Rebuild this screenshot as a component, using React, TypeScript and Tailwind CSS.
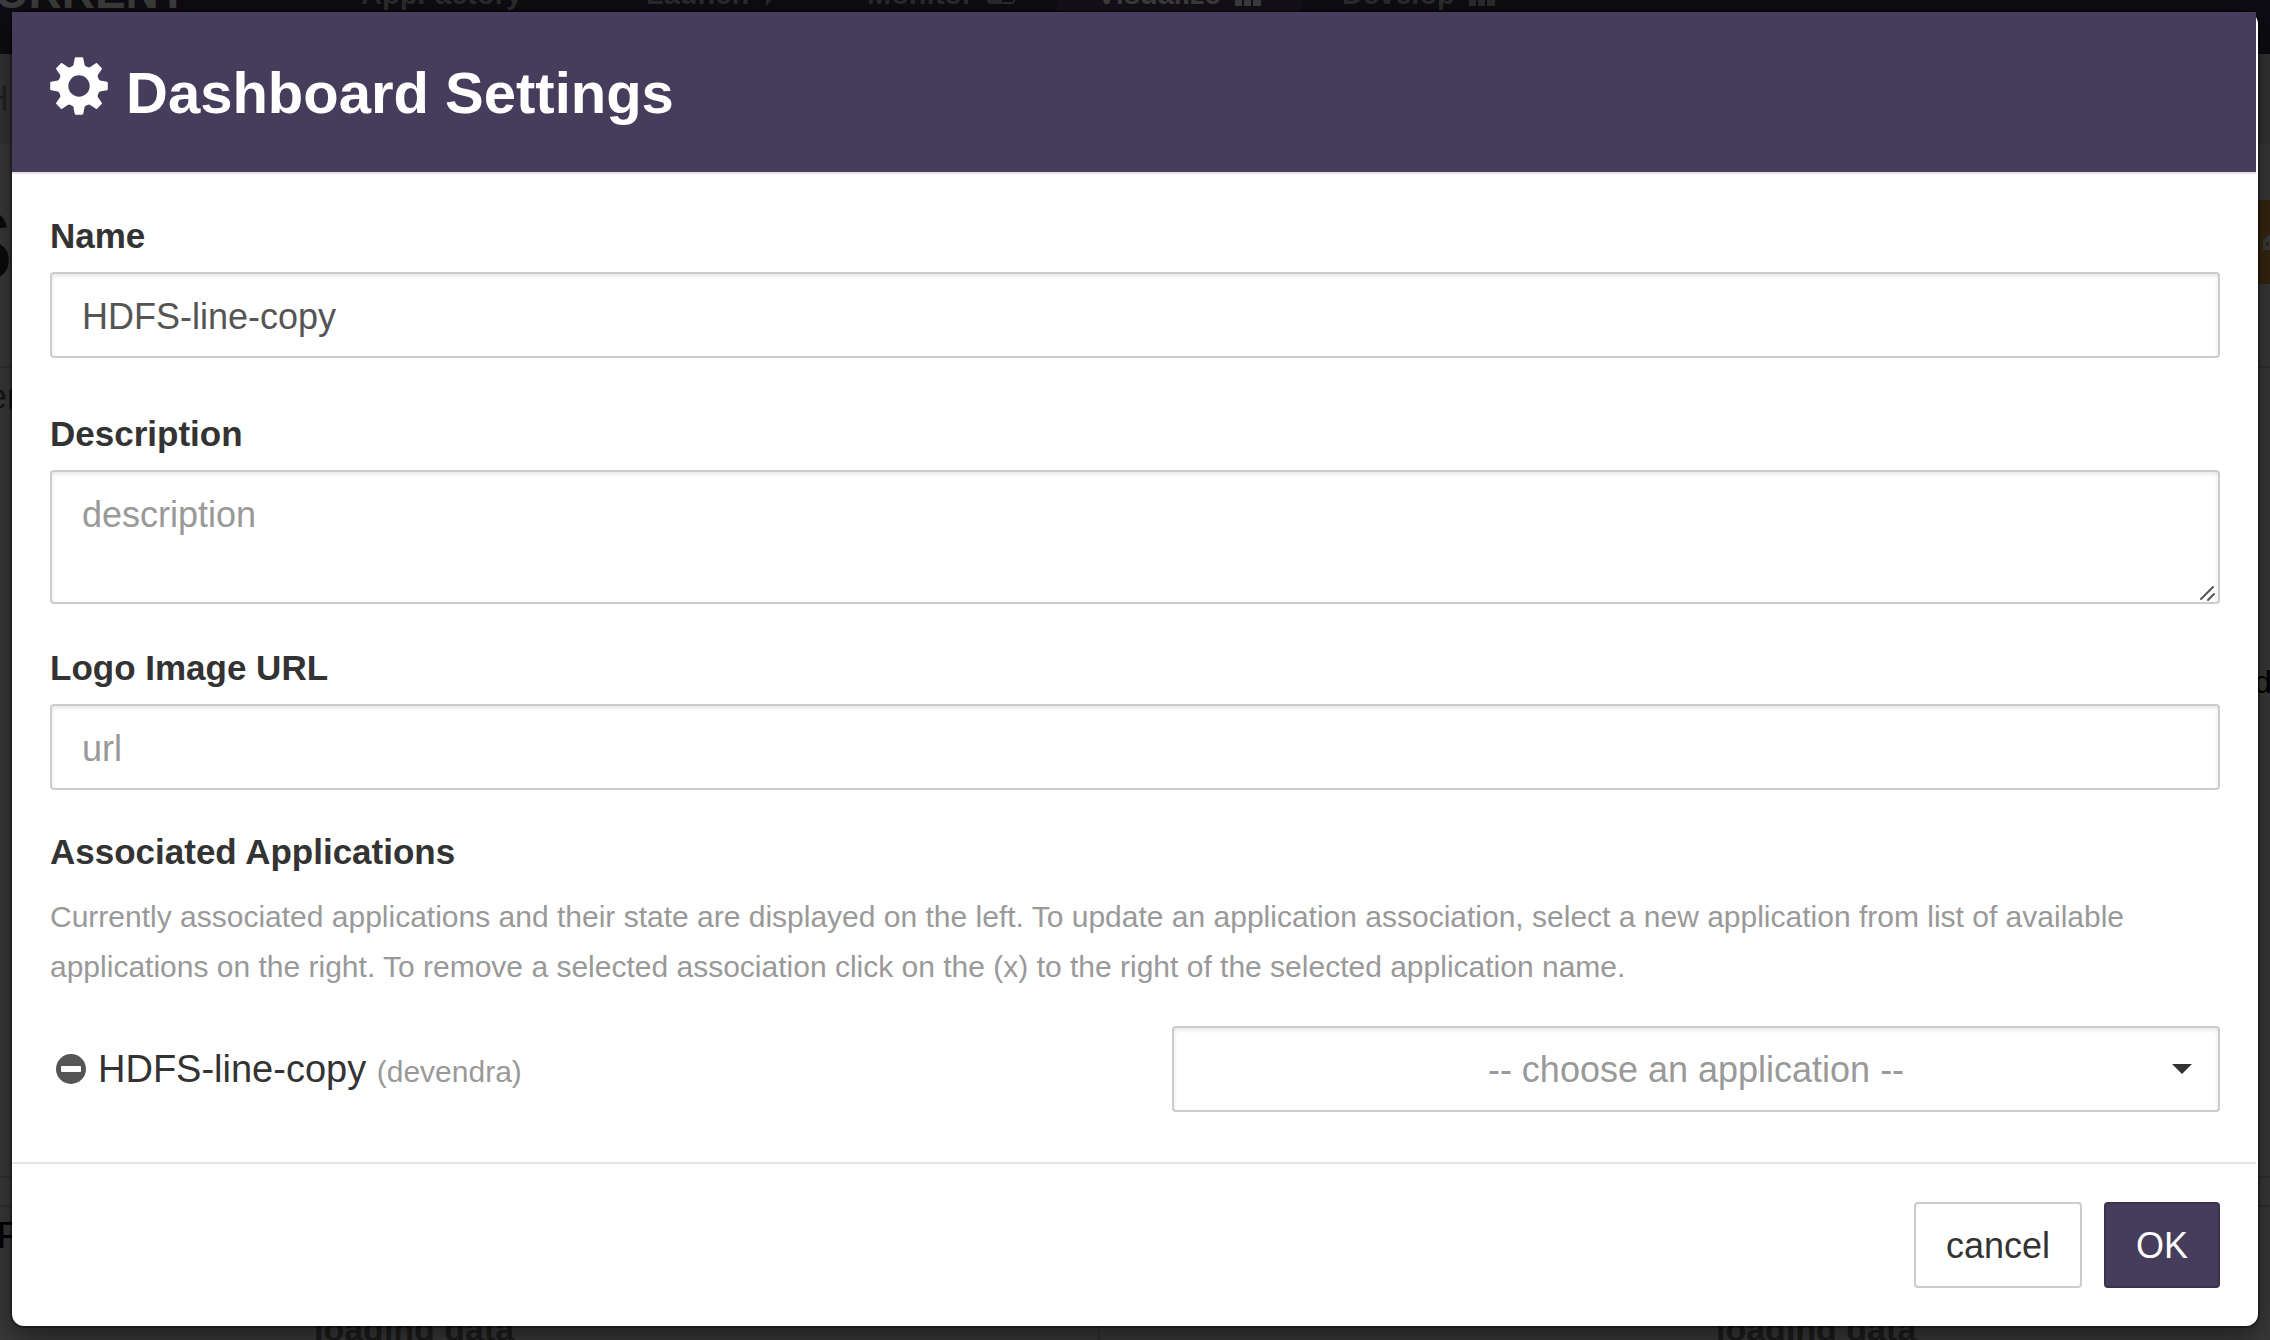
import React from "react";

const FIELD =
  "w-full rounded-[4px] border-2 border-[#ccc] bg-white px-[30px] text-[36px] text-[#555] shadow-[inset_0_2px_4px_rgba(0,0,0,0.1)] outline-none placeholder:text-[#999] placeholder:opacity-100";
const LABEL = "mb-3 block text-[35px] leading-[48px] font-bold text-[#333]";

function GearIcon() {
  return (
    <svg className="size-[58px] shrink-0" viewBox="-29 -29 58 58" aria-hidden="true">
      <circle r="15.7" fill="none" stroke="#fff" strokeWidth="10" />
      {[0, 45, 90, 135, 180, 225, 270, 315].map((a) => (
        <path
          key={a}
          transform={`rotate(${a})`}
          d="M-3.2 -28.8H3.2Q4 -28.8 4.2 -28L5.6 -21Q6 -20 7.4 -19.2L6 -17H-6L-7.4 -19.2Q-6 -20 -5.6 -21L-4.2 -28Q-4 -28.8 -3.2 -28.8Z"
          fill="#fff"
        />
      ))}
    </svg>
  );
}

function MinusIcon() {
  return (
    <svg className="size-[30px]" viewBox="0 0 30 30" aria-hidden="true">
      <circle cx="15" cy="15" r="15" fill="#555" />
      <rect x="5" y="12" width="20" height="6" rx="1" fill="#fff" />
    </svg>
  );
}

function Bars() {
  return (
    <svg className="mt-1 h-[26px] w-[26px]" viewBox="0 0 26 26" fill="currentColor" aria-hidden="true">
      <rect x="0" y="6" width="7" height="20" />
      <rect x="9" y="6" width="7" height="20" />
      <rect x="18" y="6" width="8" height="20" />
    </svg>
  );
}

function Laptop() {
  return (
    <svg className="mt-1 h-[26px] w-[28px]" viewBox="0 0 28 26" fill="currentColor" aria-hidden="true">
      <path fillRule="evenodd" d="M3 2H25V16H28V20Q28 24 25 24H3Q0 24 0 20V16H3ZM15 20V22H26V20Z" />
    </svg>
  );
}

function Play() {
  return (
    <svg className="mt-1 h-[26px] w-[16px]" viewBox="0 0 16 26" fill="currentColor" aria-hidden="true">
      <path d="M3 -2L16 12L3 26Z" />
    </svg>
  );
}

function TagIcon() {
  return (
    <svg className="h-[16px] w-[7px]" viewBox="0 0 7 16" aria-hidden="true">
      <path fillRule="evenodd" d="M0 6L7 0V16H0ZM3 8V11L6 13V8Z" fill="#3c3c3c" />
    </svg>
  );
}

function NavItem({ className, label, children }: { className: string; label: string; children?: React.ReactNode }) {
  return (
    <span className={`flex h-[86px] shrink-0 items-start gap-[14px] pt-[8px] pl-[40px] text-[29px] leading-[36px] font-bold ${className}`}>
      {label}
      {children}
    </span>
  );
}

function Backdrop() {
  return (
    <div aria-hidden="true" className="absolute inset-0 flex flex-col overflow-hidden bg-[#393939] text-[36px] leading-[50px]">
      <div className="flex h-[54px] shrink-0 overflow-hidden bg-[#0d0c12] text-[#2b2b2b]">
        <div className="-mt-[32px] flex">
          <span className="-ml-[38px] w-[359px] text-[46px] leading-[48px] font-bold text-[#3c3c3c]">CURRENT</span>
          <NavItem className="w-[285px]" label="AppFactory" />
          <NavItem className="w-[221px]" label="Launch"><Play /></NavItem>
          <NavItem className="w-[230px]" label="Monitor"><Laptop /></NavItem>
          <NavItem className="w-[245px] bg-[#131017] text-[#3c3c3c]" label="Visualize"><Bars /></NavItem>
          <NavItem className="w-[245px]" label="Develop"><Bars /></NavItem>
        </div>
      </div>
      <div className="flex h-[90px] shrink-0 items-center bg-[#343434] text-[#222]">
        <span className="-ml-[17px]">H</span>
      </div>
      <div className="flex h-[224px] shrink-0 items-center justify-between border-b-2 border-[#303030] pb-[26px] text-[#0b0b0b]">
        <span className="-ml-[54px] pt-[6px] text-[100px] leading-[96px] font-bold">S</span>
        <span className="flex h-[84px] w-[12px] items-center justify-end bg-[#352610]">
          <TagIcon />
        </span>
      </div>
      <div className="flex h-[810px] shrink-0 items-start justify-between border-b-2 border-[#303030] text-black">
        <span className="-ml-[13px] pt-[4px] text-[#151515]">er</span>
        <span className="w-[16px] pt-[289px] text-[32px]">d</span>
      </div>
      <div className="h-[29px] shrink-0 border-b-2 border-[#303030]" />
      <div className="flex h-[100px] shrink-0 items-start pt-[4px] text-black">
        <span className="-ml-[3px]">F</span>
      </div>
      <div className="grid shrink-0 grid-cols-[1100px_1fr] text-[34px] leading-[44px] font-bold text-[#1c1c1c]">
        <span className="border-r-2 border-[#303030] pl-[314px]">loading data</span>
        <span className="pl-[616px]">loading data</span>
      </div>
    </div>
  );
}

export default function App() {
  return (
    <div className="relative flex min-h-screen flex-col overflow-hidden font-['Liberation_Sans',Arial,sans-serif]">
      <Backdrop />
      <form
        role="dialog"
        aria-labelledby="title"
        onSubmit={(e) => e.preventDefault()}
        className="relative mx-3 mt-3 mb-[14px] rounded-xl bg-white shadow-[0_0_0_2px_rgba(0,0,0,0.3),0_10px_30px_rgba(0,0,0,0.5)]"
      >
        <header className="mr-[2px] flex items-start gap-[18px] border-b-2 border-[#e5e5e5] bg-[#463c5c] bg-clip-padding pt-[45px] pb-[43px] pl-[38px]">
          <GearIcon />
          <h1 id="title" className="text-[58px] leading-[72px] font-bold text-white">Dashboard Settings</h1>
        </header>

        <div className="px-[38px] pt-[38px] pb-[50px]">
          <label htmlFor="name" className={LABEL}>Name</label>
          <input id="name" className={`${FIELD} mb-[52px] block h-[86px] pt-[3px]`} defaultValue="HDFS-line-copy" />

          <label htmlFor="description" className={LABEL}>Description</label>
          <div className="relative mb-[40px]">
            <textarea
              id="description"
              placeholder="description"
              className={`${FIELD} block h-[134px] resize-y py-[20px] leading-[46px] [&::-webkit-resizer]:hidden`}
            />
            <svg className="pointer-events-none absolute right-[5px] bottom-[3px] size-[15px]" viewBox="0 0 15 15" aria-hidden="true">
              <path d="M1 13L13 1M8 14L14 8" stroke="#555" strokeWidth="2" strokeLinecap="round" />
            </svg>
          </div>

          <label htmlFor="logo" className={LABEL}>Logo Image URL</label>
          <input id="logo" placeholder="url" className={`${FIELD} mb-[38px] block h-[86px] pt-[3px]`} />

          <label htmlFor="application" className={LABEL}>Associated Applications</label>
          <p className="mt-4 mb-[34px] text-[30px] leading-[50px] text-[#999]">
            Currently associated applications and their state are displayed on the left. To update an application
            association, select a new application from list of available applications on the right. To remove a selected
            association click on the (x) to the right of the selected application name.
          </p>

          <div className="grid grid-cols-[1fr_1048px] items-center">
            <div className="flex items-center pl-[6px]">
              <button type="button" aria-label="Remove HDFS-line-copy" className="mr-[12px] size-[30px]">
                <MinusIcon />
              </button>
              <span className="pt-[2px] text-[38px] leading-[50px] text-[#333]">
                HDFS-line-copy <span className="text-[30px] text-[#999]">(devendra)</span>
              </span>
            </div>
            <div className="relative">
              <select id="application" className={`${FIELD} block h-[86px] appearance-none pt-[2px] text-center [text-align-last:center] text-[#999]`}>
                <option>-- choose an application --</option>
              </select>
              <svg className="pointer-events-none absolute top-[38px] right-[28px] h-[10px] w-[20px]" viewBox="0 0 20 10" aria-hidden="true">
                <path d="M0 0H20L10 10Z" fill="#333" />
              </svg>
            </div>
          </div>
        </div>

        <footer className="relative flex justify-end gap-[22px] px-[38px] pt-[40px] pb-[38px] before:absolute before:top-0 before:right-[2px] before:left-0 before:h-[2px] before:bg-[#e5e5e5]">
          <button type="button" className="h-[86px] rounded-[4px] border-2 border-[#ccc] bg-white px-[30px] pt-[2px] text-[36px] text-[#333]">
            cancel
          </button>
          <button type="submit" className="h-[86px] rounded-[4px] border-2 border-[#3a314d] bg-[#463c5c] px-[30px] pt-[2px] text-[36px] text-white">
            OK
          </button>
        </footer>
      </form>
    </div>
  );
}
